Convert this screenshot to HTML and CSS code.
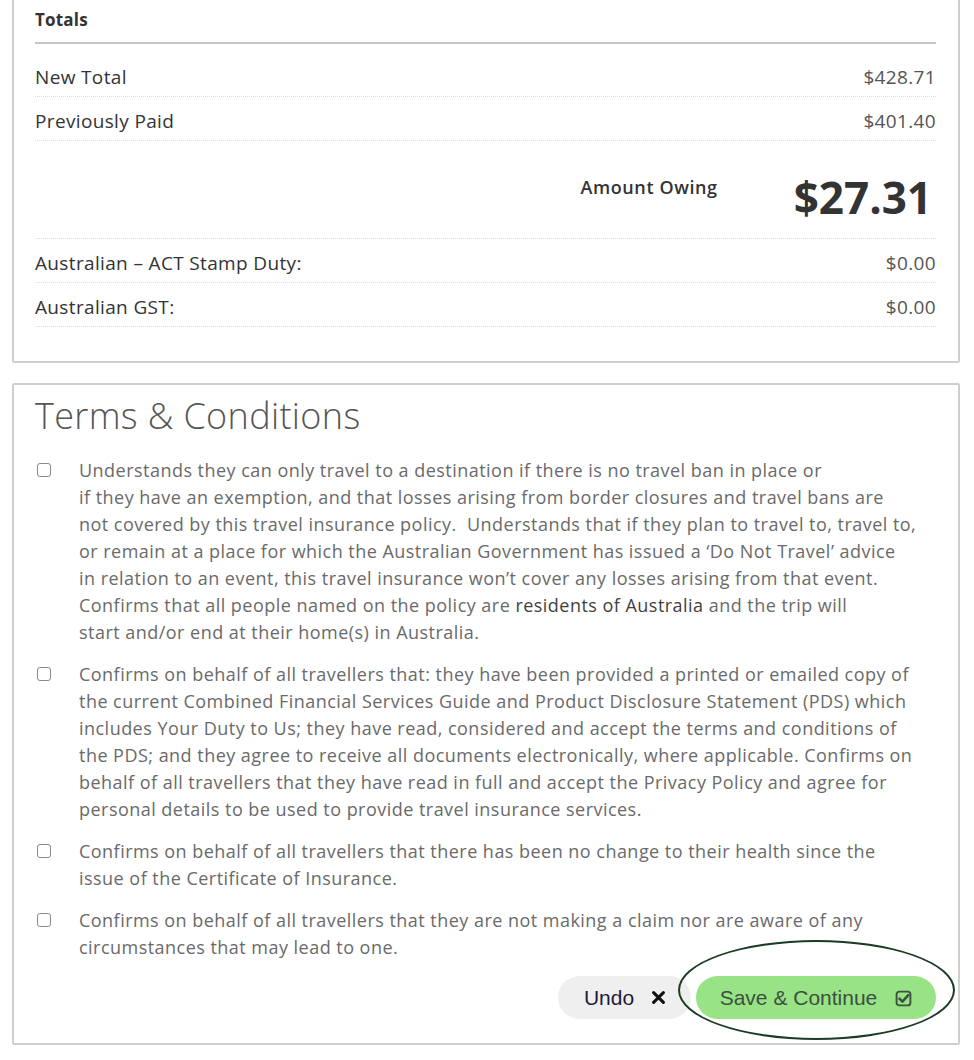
FILE: index.html
```html
<!DOCTYPE html>
<html lang="en">
<head>
<meta charset="utf-8">
<title>Totals and Terms</title>
<link rel="stylesheet" href="styles.css">
</head>
<body>
<div class="page">
  <section class="card totals">
    <h2 class="totals-head">Totals</h2>
    <div class="row"><span class="label">New Total</span><span class="value">$428.71</span></div>
    <div class="row"><span class="label">Previously Paid</span><span class="value">$401.40</span></div>
    <div class="row owing"><span class="owing-label">Amount Owing</span><span class="owing-value">$27.31</span></div>
    <div class="row"><span class="label">Australian – ACT Stamp Duty:</span><span class="value">$0.00</span></div>
    <div class="row"><span class="label">Australian GST:</span><span class="value">$0.00</span></div>
  </section>

  <section class="card terms">
    <h1 class="terms-title">Terms &amp; Conditions</h1>
    <div class="item">
      <span class="box"></span>
      <p class="text">Understands they can only travel to a destination if there is no travel ban in place or<br>if they have an exemption, and that losses arising from border closures and travel bans are<br>not covered by this travel insurance policy.&nbsp; Understands that if they plan to travel to, travel to,<br>or remain at a place for which the Australian Government has issued a ‘Do Not Travel’ advice<br>in relation to an event, this travel insurance won’t cover any losses arising from that event.<br>Confirms that all people named on the policy are <span class="strong">residents of Australia</span> and the trip will<br>start and/or end at their home(s) in Australia.</p>
    </div>
    <div class="item">
      <span class="box"></span>
      <p class="text">Confirms on behalf of all travellers that: they have been provided a printed or emailed copy of<br>the current Combined Financial Services Guide and Product Disclosure Statement (PDS) which<br>includes Your Duty to Us; they have read, considered and accept the terms and conditions of<br>the PDS; and they agree to receive all documents electronically, where applicable. Confirms on<br>behalf of all travellers that they have read in full and accept the Privacy Policy and agree for<br>personal details to be used to provide travel insurance services.</p>
    </div>
    <div class="item">
      <span class="box"></span>
      <p class="text">Confirms on behalf of all travellers that there has been no change to their health since the<br>issue of the Certificate of Insurance.</p>
    </div>
    <div class="item">
      <span class="box"></span>
      <p class="text">Confirms on behalf of all travellers that they are not making a claim nor are aware of any<br>circumstances that may lead to one.</p>
    </div>
    <div class="actions">
      <button class="btn undo">Undo
        <svg class="x-icon" viewBox="0 0 12 12" width="13" height="13" aria-hidden="true"><path d="M1.5 1.5 L10.5 10.5 M10.5 1.5 L1.5 10.5" stroke="#111" stroke-width="2.8" stroke-linecap="round"/></svg>
      </button>
      <button class="btn save">Save &amp; Continue
        <svg class="check-icon" viewBox="0 0 16 16" width="17" height="17" aria-hidden="true"><rect x="1.5" y="1.5" width="13" height="13" rx="2.5" fill="none" stroke="#3e5040" stroke-width="1.8"/><path d="M4.2 8.2 L7 11 L12.5 4.8" fill="none" stroke="#3e5040" stroke-width="2.4" stroke-linecap="round" stroke-linejoin="round"/></svg>
      </button>
    </div>
  </section>
  <div class="highlight"></div>
</div>
</body>
</html>
```

FILE: styles.css
```css
html, body {
  margin: 0;
  padding: 0;
  background: #ffffff;
}

body {
  font-family: "Open Sans", "Liberation Sans", sans-serif;
  color: #333;
}

.page {
  position: relative;
  width: 948px;
  margin-left: 12px;
}

.card {
  border: 2px solid #cfcfcf;
  border-radius: 2px;
  background: #fff;
}

/* Totals card */
.totals {
  margin-top: -4px;
  padding: 10px 22px 34px 21px;
}

.totals-head {
  margin: 0 0 9px 0;
  padding-bottom: 10px;
  border-bottom: 2px solid #c6c6c6;
  font-size: 17px;
  line-height: 24px;
  font-weight: 700;
  color: #333;
  letter-spacing: 0.2px;
}

.row {
  display: flex;
  justify-content: space-between;
  align-items: center;
  padding: 13px 0 8px 0;
  border-bottom: 1px dotted #dcdcdc;
  font-size: 19px;
  line-height: 22px;
  letter-spacing: 0.35px;
}

.label {
  color: #333;
}

.value {
  color: #555;
}

.row.owing {
  justify-content: flex-end;
  align-items: flex-start;
  gap: 76px;
  padding: 30px 4px 15px 0;
}

.owing-label {
  margin-top: 5px;
  font-size: 18px;
  line-height: 22px;
  font-weight: 600;
  letter-spacing: 0.6px;
  color: #333;
}

.owing-value {
  font-size: 44px;
  line-height: 52px;
  font-weight: 700;
  letter-spacing: 0;
  color: #333;
}

/* Terms card */
.terms {
  margin-top: 20px;
  padding: 9px 22px 24px 21px;
}

.terms-title {
  margin: 0 0 19px 0;
  font-size: 36px;
  line-height: 44px;
  font-weight: 300;
  letter-spacing: 0.35px;
  color: #555;
}

.item {
  display: flex;
  align-items: flex-start;
  gap: 28px;
  margin-bottom: 15px;
  padding-left: 2px;
}

.box {
  flex: 0 0 auto;
  width: 12px;
  height: 12px;
  margin-top: 6px;
  border: 1.5px solid #8a8a8a;
  border-radius: 3px;
  background: #fff;
}

.text {
  margin: 0;
  font-size: 18px;
  line-height: 27px;
  letter-spacing: 0.47px;
  color: #6a6a6a;
  white-space: nowrap;
}

.strong {
  color: #3f3f3f;
}

.actions {
  display: flex;
  justify-content: flex-end;
  gap: 5px;
}

.btn {
  display: inline-flex;
  align-items: center;
  justify-content: center;
  height: 43px;
  border: none;
  border-radius: 22px;
  font-family: "Liberation Sans", Arial, sans-serif;
  font-size: 21px;
  cursor: pointer;
}

.undo {
  width: 133px;
  gap: 18px;
  background: #efefef;
  color: #1c1c3c;
}

.save {
  width: 240px;
  gap: 18px;
  background: #97e385;
  color: #3e4e40;
}

.check-icon {
  margin-top: 2px;
}

.highlight {
  position: absolute;
  left: 666px;
  top: 944px;
  width: 273px;
  height: 96px;
  border: 2.5px solid #1b3b24;
  border-radius: 50%;
  pointer-events: none;
}
```
